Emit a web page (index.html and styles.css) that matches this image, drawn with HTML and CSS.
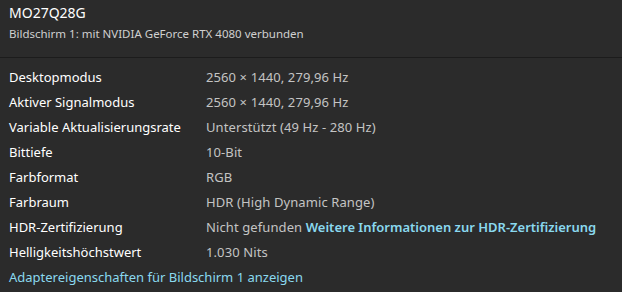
FILE: index.html
```html
<!DOCTYPE html>
<html lang="de">
<head>
<meta charset="utf-8">
<link rel="stylesheet" href="styles.css">
</head>
<body>
<div class="panel">
  <header class="head">
    <div class="title">MO27Q28G</div>
    <div class="subtitle">Bildschirm 1: mit NVIDIA GeForce RTX 4080 verbunden</div>
  </header>
  <div class="rows">
    <div class="row"><span class="label">Desktopmodus</span><span class="value">2560 × 1440, 279,96 Hz</span></div>
    <div class="row"><span class="label">Aktiver Signalmodus</span><span class="value">2560 × 1440, 279,96 Hz</span></div>
    <div class="row"><span class="label">Variable Aktualisierungsrate</span><span class="value">Unterstützt (49 Hz - 280 Hz)</span></div>
    <div class="row"><span class="label">Bittiefe</span><span class="value">10-Bit</span></div>
    <div class="row"><span class="label">Farbformat</span><span class="value">RGB</span></div>
    <div class="row"><span class="label">Farbraum</span><span class="value">HDR (High Dynamic Range)</span></div>
    <div class="row"><span class="label">HDR-Zertifizierung</span><span class="value">Nicht gefunden <a class="link strong" href="#">Weitere Informationen zur HDR-Zertifizierung</a></span></div>
    <div class="row"><span class="label">Helligkeitshöchstwert</span><span class="value">1.030 Nits</span></div>
    <div class="row"><a class="link" href="#">Adaptereigenschaften für Bildschirm 1 anzeigen</a></div>
  </div>
</div>
</body>
</html>
```
FILE: styles.css
```css
html, body {
  margin: 0;
  padding: 0;
  background: #2b2b2b;
}
body {
  font-family: "Noto Sans", "Open Sans", sans-serif;
  color: #ffffff;
  width: 622px;
  height: 292px;
  overflow: hidden;
}
.head {
  padding: 3px 9px 0 9px;
  height: 58px;
  box-sizing: border-box;
  border-bottom: 1px solid #1c1c1c;
}
.title {
  font-size: 14px;
  line-height: 19px;
  color: #ffffff;
}
.subtitle {
  font-size: 11.5px;
  line-height: 16px;
  color: #d0d0d0;
  margin-top: 4px;
}
.rows {
  padding: 6px 9px 0 9px;
}
.row {
  display: flex;
  height: 25px;
  align-items: center;
  font-size: 13px;
}
.label {
  width: 197px;
  flex: none;
  color: #ffffff;
}
.value {
  color: #c4c4c4;
  letter-spacing: 0.1px;
}
.link {
  color: #8ad9ef;
  text-decoration: none;
  letter-spacing: 0;
}
.link.strong {
  font-weight: 600;
}
```
